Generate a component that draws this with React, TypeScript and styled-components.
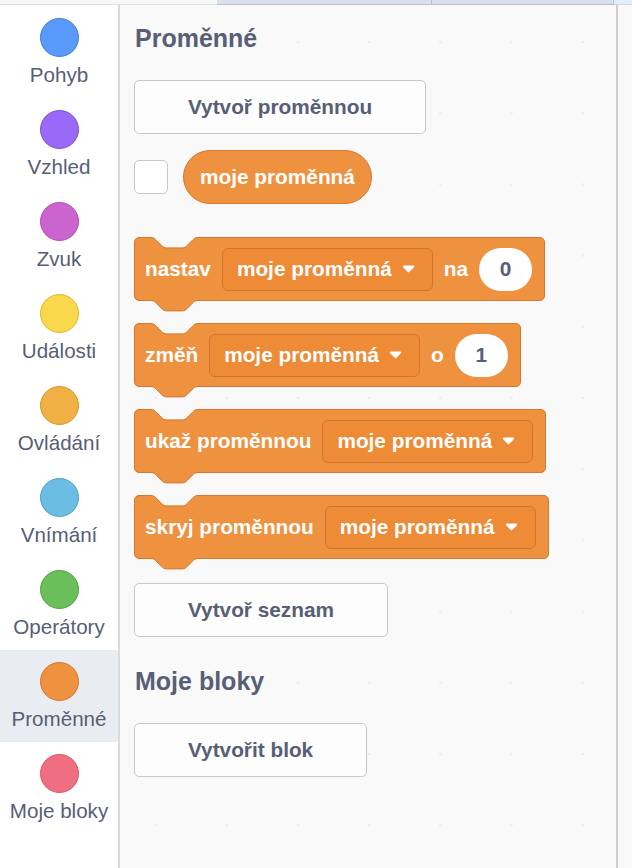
import React from 'react';
import styled, { createGlobalStyle } from 'styled-components';

const GlobalStyle = createGlobalStyle`
  html, body { margin: 0; padding: 0; background: #f9f9f9; }
  body {
    font-family: "Liberation Sans", Arial, Helvetica, sans-serif;
    width: 632px;
    height: 868px;
    overflow: hidden;
  }
  #root { height: 868px; }
`;

const TEXT = '#575e75';
const BLOCK_FILL = '#ef9240';
const BLOCK_STROKE = '#d5772c';
const FLYOUT_BG = '#f9f9f9';
const BOLD_SIZE = '20.8px';

const Page = styled.div`
  display: flex;
  flex-direction: column;
  width: 632px;
  height: 868px;
`;

const TabStrip = styled.div`
  display: flex;
  flex: none;
  height: 5px;
`;

const TabSegment = styled.div<{ $w: number; $bg: string; $line: string; $sep?: boolean }>`
  width: ${p => p.$w}px;
  height: 4px;
  background: ${p => p.$bg};
  border-bottom: 1px solid ${p => p.$line};
  border-right: ${p => (p.$sep ? `1px solid ${p.$line}` : 'none')};
  flex: none;
`;

const Body = styled.div`
  display: flex;
  flex: 1;
  min-height: 0;
`;

const Sidebar = styled.nav`
  width: 118px;
  flex: none;
  background: #ffffff;
  border-right: 2px solid #dadada;
  padding-top: 1px;
  display: flex;
  flex-direction: column;
`;

const CategoryItem = styled.div<{ $selected?: boolean }>`
  height: 92px;
  box-sizing: border-box;
  padding-top: 12px;
  display: flex;
  flex-direction: column;
  align-items: center;
  background: ${p => (p.$selected ? '#e9edf2' : 'transparent')};
`;

const Bubble = styled.div<{ $fill: string; $stroke: string }>`
  width: 39px;
  height: 39px;
  box-sizing: border-box;
  border-radius: 50%;
  background: ${p => p.$fill};
  border: 1px solid ${p => p.$stroke};
`;

const CategoryLabel = styled.div`
  margin-top: 6px;
  font-size: 20.6px;
  line-height: 24px;
  color: ${TEXT};
  white-space: nowrap;
`;

const Flyout = styled.section`
  width: 498px;
  flex: none;
  box-sizing: border-box;
  padding: 18px 0 0 14px;
  background-color: ${FLYOUT_BG};
  background-image: radial-gradient(circle at center, #ebebeb 0, #ebebeb 1px, transparent 1.6px);
  background-size: 71.2px 71.2px;
  background-position: 0 1.5px;
  border-right: 2px solid #cecece;
  display: flex;
  flex-direction: column;
  align-items: flex-start;
`;

const Workspace = styled.div`
  flex: 1;
  background: ${FLYOUT_BG};
`;

const Heading = styled.h2<{ $mt?: number }>`
  margin: ${p => p.$mt ?? 0}px 0 0 1px;
  font-size: 25px;
  line-height: 30px;
  font-weight: bold;
  color: ${TEXT};
`;

const FlyoutButton = styled.button<{ $mt: number }>`
  margin-top: ${p => p.$mt}px;
  height: 54px;
  padding: 0 53px;
  box-sizing: border-box;
  background: #fdfdfd;
  border: 1px solid #c8c8c8;
  border-radius: 5px;
  font-family: inherit;
  font-size: ${BOLD_SIZE};
  font-weight: bold;
  color: ${TEXT};
  white-space: nowrap;
`;

const VarRow = styled.div`
  margin-top: 16px;
  height: 54px;
  display: flex;
  align-items: center;
  gap: 15px;
`;

const Checkbox = styled.div`
  width: 34px;
  height: 34px;
  box-sizing: border-box;
  border: 1px solid #c8c8c8;
  border-radius: 5px;
  background: #ffffff;
`;

const Reporter = styled.div`
  height: 54px;
  box-sizing: border-box;
  padding: 0 16px;
  display: flex;
  align-items: center;
  border-radius: 27px;
  background: ${BLOCK_FILL};
  border: 1px solid ${BLOCK_STROKE};
  color: #ffffff;
  font-size: ${BOLD_SIZE};
  font-weight: bold;
  white-space: nowrap;
`;

const Block = styled.div<{ $mt: number }>`
  position: relative;
  margin-top: ${p => p.$mt}px;
  height: 64px;
  box-sizing: border-box;
  padding: 0 12px 0 10px;
  display: flex;
  align-items: center;
  gap: 11px;
  background: ${BLOCK_FILL};
  border: 1px solid ${BLOCK_STROKE};
  border-radius: 5px;
  color: #ffffff;
  font-size: ${BOLD_SIZE};
  font-weight: bold;
  white-space: nowrap;
`;

const Notch = styled.svg`
  position: absolute;
  left: 16px;
  top: -1px;
  overflow: visible;
`;

const Tab = styled.svg`
  position: absolute;
  left: 16px;
  top: 100%;
  overflow: visible;
`;

const Dropdown = styled.div`
  height: 43px;
  box-sizing: border-box;
  padding: 0 17px 0 14px;
  display: flex;
  align-items: center;
  gap: 10px;
  border: 1px solid #d3742a;
  border-radius: 6px;
  background: #ed8b37;
`;

const NumberField = styled.div`
  width: 53px;
  height: 43px;
  border-radius: 22px;
  background: #ffffff;
  color: ${TEXT};
  display: flex;
  align-items: center;
  justify-content: center;
`;

const CURVE =
  'c 2.6,0 3.9,1.3 5.2,2.6 l 5.2,5.2 c 1.3,1.3 2.6,2.6 5.2,2.6 h 15.6 c 2.6,0 3.9,-1.3 5.2,-2.6 l 5.2,-5.2 c 1.3,-1.3 2.6,-2.6 5.2,-2.6';

const NotchShape = () => (
  <Notch width="47" height="12" viewBox="0 0 47 12">
    <path d={`M0,0 L0,0.5 ${CURVE} L46.8,0 Z`} fill={FLYOUT_BG} />
    <path d={`M0,0.5 ${CURVE}`} fill="none" stroke={BLOCK_STROKE} strokeWidth="1" />
  </Notch>
);

const TabShape = () => (
  <Tab width="47" height="12" viewBox="0 0 47 12">
    <path d={`M0,0 L0,0.5 ${CURVE} L46.8,0 Z`} fill={BLOCK_FILL} />
    <path d={`M0,0.5 ${CURVE}`} fill="none" stroke={BLOCK_STROKE} strokeWidth="1" />
  </Tab>
);

const Caret = () => (
  <svg width="13" height="8" viewBox="0 0 13 8">
    <path d="M1.8,1.6 H11.2 L6.5,6.4 Z" fill="#ffffff" stroke="#ffffff" strokeWidth="2" strokeLinejoin="round" />
  </svg>
);

const VarDropdown = () => (
  <Dropdown>
    <span>moje proměnná</span>
    <Caret />
  </Dropdown>
);

const StackBlock: React.FC<{ mt: number; children: React.ReactNode }> = ({ mt, children }) => (
  <Block $mt={mt}>
    <NotchShape />
    {children}
    <TabShape />
  </Block>
);

const categories = [
  { name: 'Pohyb', fill: '#5b9afd', stroke: '#4279d6' },
  { name: 'Vzhled', fill: '#9a69f7', stroke: '#7a4fd2' },
  { name: 'Zvuk', fill: '#cc64d0', stroke: '#b24bb6' },
  { name: 'Události', fill: '#fad84b', stroke: '#dcb631' },
  { name: 'Ovládání', fill: '#f1b044', stroke: '#d5952d' },
  { name: 'Vnímání', fill: '#6bbde3', stroke: '#4d9fc5' },
  { name: 'Operátory', fill: '#6abf5a', stroke: '#4fa341' },
  { name: 'Proměnné', fill: '#ef9240', stroke: '#d2752a', selected: true },
  { name: 'Moje bloky', fill: '#ef6e80', stroke: '#df5368' },
];

export default function App() {
  return (
    <Page>
      <GlobalStyle />
      <TabStrip>
        <TabSegment $w={217} $bg="#f7f7f7" $line="#e0e0e0" />
        <TabSegment $w={214} $bg="#d9e1ef" $line="#b8c0d0" $sep />
        <TabSegment $w={181} $bg="#d9e1ef" $line="#b8c0d0" $sep />
        <TabSegment $w={18} $bg="#e4edfb" $line="#ccd5e4" />
      </TabStrip>
      <Body>
        <Sidebar>
          {categories.map(c => (
            <CategoryItem key={c.name} $selected={c.selected}>
              <Bubble $fill={c.fill} $stroke={c.stroke} />
              <CategoryLabel>{c.name}</CategoryLabel>
            </CategoryItem>
          ))}
        </Sidebar>
        <Flyout>
          <Heading>Proměnné</Heading>
          <FlyoutButton $mt={27}>Vytvoř proměnnou</FlyoutButton>
          <VarRow>
            <Checkbox />
            <Reporter>moje proměnná</Reporter>
          </VarRow>
          <StackBlock mt={33}>
            <span>nastav</span>
            <VarDropdown />
            <span>na</span>
            <NumberField>0</NumberField>
          </StackBlock>
          <StackBlock mt={22}>
            <span>změň</span>
            <VarDropdown />
            <span>o</span>
            <NumberField>1</NumberField>
          </StackBlock>
          <StackBlock mt={22}>
            <span>ukaž proměnnou</span>
            <VarDropdown />
          </StackBlock>
          <StackBlock mt={22}>
            <span>skryj proměnnou</span>
            <VarDropdown />
          </StackBlock>
          <FlyoutButton $mt={24}>Vytvoř seznam</FlyoutButton>
          <Heading $mt={29}>Moje bloky</Heading>
          <FlyoutButton $mt={27}>Vytvořit blok</FlyoutButton>
        </Flyout>
        <Workspace />
      </Body>
    </Page>
  );
}
